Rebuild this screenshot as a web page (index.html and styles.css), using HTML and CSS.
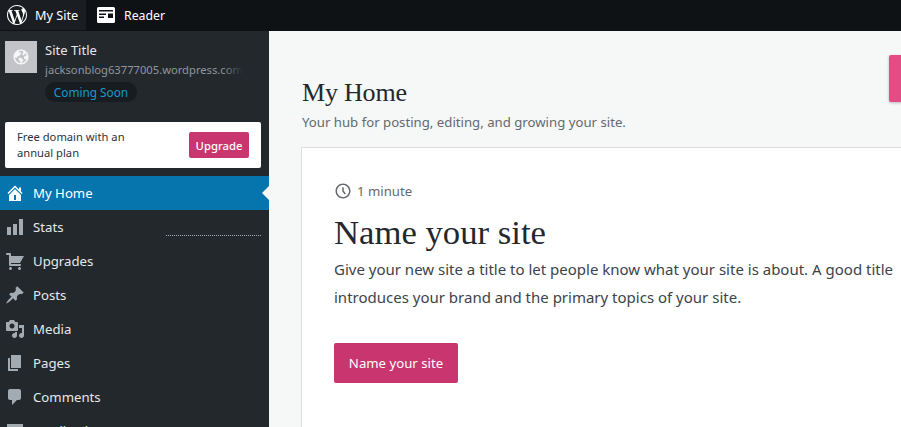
FILE: index.html
```html
<!DOCTYPE html>
<html lang="en">
<head>
  <meta charset="UTF-8" />
  <meta name="viewport" content="width=device-width, initial-scale=1.0"/>
  <title>My Home</title>
  <link rel="stylesheet" href="styles.css">
</head>
<body>

  <!-- Top bar -->
  <header class="topbar">
    <a class="top-tab top-tab-site">
      <svg class="wp-logo" viewBox="0 0 24 24"><path d="M21.469 6.825c.84 1.537 1.318 3.3 1.318 5.175 0 3.979-2.156 7.456-5.363 9.325l3.295-9.527c.615-1.54.82-2.771.82-3.864 0-.405-.026-.78-.07-1.11m-7.981.105c.647-.03 1.232-.105 1.232-.105.582-.075.514-.93-.067-.899 0 0-1.755.135-2.88.135-1.064 0-2.85-.15-2.85-.15-.585-.03-.661.855-.075.885 0 0 .54.061 1.125.09l1.68 4.605-2.37 7.08L5.354 6.9c.649-.03 1.234-.1 1.234-.1.585-.075.516-.93-.065-.896 0 0-1.746.138-2.874.138-.2 0-.438-.008-.69-.015C4.911 3.15 8.235 1.215 12 1.215c2.809 0 5.365 1.072 7.286 2.833-.046-.003-.091-.009-.141-.009-1.06 0-1.812.923-1.812 1.914 0 .89.513 1.643 1.06 2.531.411.72.89 1.643.89 2.977 0 .915-.354 1.994-.821 3.479l-1.075 3.585-3.9-11.61.001.014zM12 22.784c-1.059 0-2.081-.153-3.048-.437l3.237-9.406 3.315 9.087c.024.053.05.101.078.149-1.12.393-2.325.609-3.582.609M1.211 12c0-1.564.336-3.05.935-4.39L7.29 21.709C3.694 19.96 1.212 16.271 1.211 12M12 0C5.385 0 0 5.385 0 12s5.385 12 12 12 12-5.385 12-12S18.615 0 12 0"/></svg>
      <span>My Site</span>
    </a>
    <a class="top-tab top-tab-reader">
      <svg class="reader-icon" viewBox="0 0 18 16"><path fill-rule="evenodd" d="M1.500 0h15A1.500 1.500 0 0 1 18 1.500v13a1.500 1.500 0 0 1-1.500 1.500h-15A1.500 1.500 0 0 1 0 14.500v-13A1.500 1.500 0 0 1 1.500 0zM2 3v1.500h14V3zM2 6.500V8h7V6.500zM2 9.500V11h5V9.500zM11 6.500V11h5V6.500z"/></svg>
      <span>Reader</span>
    </a>
  </header>

  <div class="layout">
    <!-- Sidebar -->
    <aside class="sidebar">
      <div class="site-card">
        <div class="site-avatar">
          <svg viewBox="0 0 24 24"><path d="M12 2C6.477 2 2 6.477 2 12s4.477 10 10 10 10-4.477 10-10S17.523 2 12 2zm0 18l2-2 1-1v-2h-2v-1l-1-1H9v3l2 2v1.930c-3.940-.494-7-3.858-7-7.930l1 1h2v-2h2l3-3V6h-2L9 5v-.41C9.927 4.210 10.940 4 12 4s2.073.212 3 .590V6l-1 1v2l1 1 3.130-3.130c.752.897 1.304 1.964 1.606 3.130H18l-2 2v2l1 1h2l.286.286C18.030 18.060 15.240 20 12 20z"/></svg>
        </div>
        <div class="site-info">
          <div class="site-title">Site Title</div>
          <div class="site-url">jacksonblog63777005.wordpress.com</div>
          <span class="site-badge">Coming Soon</span>
        </div>
      </div>

      <div class="upsell">
        <p>Free domain with an annual plan</p>
        <button class="upsell-btn">Upgrade</button>
      </div>

      <nav class="menu">
        <a class="menu-item active">
          <svg viewBox="0 0 20 20"><path d="M16 8.500l1.530 1.530-1.060 1.060L10 4.620l-6.470 6.470-1.060-1.060L10 2.500l4 4v-2h2v4zm-6-2.460l6 5.990V18H4v-6.030zM11 17v-5H9v5h2z"/></svg>
          <span>My Home</span>
        </a>
        <a class="menu-item">
          <svg viewBox="0 0 20 20"><path d="M18 18V2h-4v16h4zm-6 0V7H8v11h4zm-6 0v-8H2v8h4z"/></svg>
          <span>Stats</span>
          <i class="sparkline"></i>
        </a>
        <a class="menu-item">
          <svg viewBox="0 0 20 20"><path d="M6 13h9c.55 0 1 .45 1 1s-.45 1-1 1H5c-.55 0-1-.45-1-1V4H2c-.55 0-1-.45-1-1s.45-1 1-1h3c.55 0 1 .45 1 1v2h13l-4 7H6v1zm-.5 3c.83 0 1.500.67 1.500 1.500S6.330 19 5.500 19 4 18.330 4 17.500 4.670 16 5.500 16zm9 0c.83 0 1.500.67 1.500 1.500s-.67 1.500-1.500 1.500-1.500-.67-1.500-1.500.67-1.500 1.500-1.500z"/></svg>
          <span>Upgrades</span>
        </a>
        <a class="menu-item">
          <svg viewBox="0 0 20 20"><path d="M10.440 3.020l1.820-1.820 6.360 6.350-1.830 1.820c-1.050-.68-2.480-.57-3.410.36l-.75.75c-.92.93-1.040 2.350-.35 3.410l-1.830 1.820-2.410-2.410-2.800 2.790c-.42.42-3.380 2.710-3.800 2.290s1.860-3.390 2.280-3.810l2.790-2.790L4.100 9.360l1.830-1.820c1.050.69 2.480.57 3.400-.36l.75-.75c.93-.92 1.050-2.350.36-3.410z"/></svg>
          <span>Posts</span>
        </a>
        <a class="menu-item">
          <svg viewBox="0 0 20 20"><path d="M13 11V4c0-.55-.45-1-1-1h-1.670L9 1H5L3.670 3H2c-.55 0-1 .45-1 1v7c0 .55.45 1 1 1h10c.55 0 1-.45 1-1zM7 4.500c1.380 0 2.500 1.120 2.500 2.500S8.380 9.500 7 9.500 4.500 8.380 4.500 7 5.620 4.500 7 4.500zM14 6h5v10.500c0 1.380-1.120 2.500-2.500 2.500S14 17.880 14 16.500s1.120-2.500 2.500-2.500c.17 0 .34.02.5.05V9h-3V6zm-4 8.050V13h2v3.500c0 1.380-1.120 2.500-2.500 2.500S7 17.880 7 16.500 8.120 14 9.500 14c.17 0 .34.02.5.05z"/></svg>
          <span>Media</span>
        </a>
        <a class="menu-item">
          <svg viewBox="0 0 20 20"><path d="M6 15V2h10v13H6zm-1 1h8v2H3V5h2v11z"/></svg>
          <span>Pages</span>
        </a>
        <a class="menu-item">
          <svg viewBox="0 0 20 20"><path d="M5 2h9c1.100 0 2 .9 2 2v7c0 1.100-.9 2-2 2h-2l-5 5v-5H5c-1.100 0-2-.9-2-2V4c0-1.100.9-2 2-2z"/></svg>
          <span>Comments</span>
        </a>
        <a class="menu-item">
          <svg viewBox="0 0 20 20"><path d="M2 3h16v14H2z"/></svg>
          <span>Feedback</span>
        </a>
      </nav>
    </aside>

    <!-- Main content -->
    <main class="content">
      <div class="page-head">
        <div class="page-title">
          <h1>My Home</h1>
          <p class="page-sub">Your hub for posting, editing, and growing your site.</p>
        </div>
        <button class="head-btn"></button>
      </div>

      <section class="task-card">
        <div class="task-time">
          <svg viewBox="0 0 24 24"><path d="M12 4c4.410 0 8 3.590 8 8s-3.590 8-8 8-8-3.590-8-8 3.590-8 8-8m0-2C6.477 2 2 6.477 2 12s4.477 10 10 10 10-4.477 10-10S17.523 2 12 2zm3.800 13.400L13 11.667V7h-2v5.333l3.200 4.266 1.600-1.200z"/></svg>
          <span>1 minute</span>
        </div>
        <h2>Name your site</h2>
        <p class="task-text">Give your new site a title to let people know what your site is about. A good title introduces your brand and the primary topics of your site.</p>
        <button class="task-btn">Name your site</button>
      </section>
    </main>
  </div>

</body>
</html>
```

FILE: styles.css
```css
* {
  box-sizing: border-box;
}

html, body {
  height: 100%;
}

body {
  margin: 0;
  overflow: hidden;
  font-family: "Noto Sans", "Open Sans", sans-serif;
  background: #f6f7f7;
  color: #2c3338;
}

.topbar {
  display: flex;
  height: 31px;
  padding-bottom: 1px;
  background: #0f1215;
  color: #fff;
  font-size: 12.7px;
}

.top-tab {
  display: flex;
  align-items: center;
}

.top-tab-site {
  width: 86px;
  padding-left: 7px;
  background: #1a1e23;
  gap: 8px;
}

.top-tab-reader {
  padding-left: 11px;
  gap: 9px;
  font-size: 12.3px;
}

.wp-logo {
  width: 20px;
  height: 20px;
  fill: #fff;
}

.reader-icon {
  width: 18px;
  height: 16px;
  fill: #fff;
}

.layout {
  display: flex;
  height: 396px;
}

/* Sidebar */
.sidebar {
  flex: 0 0 269px;
  overflow: hidden;
  background: #23282d;
  color: #e6e8ea;
}

.site-card {
  display: flex;
  gap: 8px;
  padding: 10px 0 0 5px;
}

.site-avatar {
  display: flex;
  align-items: center;
  justify-content: center;
  width: 32px;
  height: 32px;
  background: #c3c4c7;
}

.site-avatar svg {
  width: 18px;
  height: 18px;
  fill: #f6f7f7;
}

.site-info {
  width: 198px;
  margin-top: -1px;
}

.site-title {
  font-size: 13px;
  line-height: 20px;
}

.site-url {
  position: relative;
  overflow: hidden;
  margin-top: 1px;
  font-size: 11.2px;
  line-height: 18px;
  white-space: nowrap;
  color: #8f979e;
}

.site-url::after {
  content: "";
  position: absolute;
  top: 0;
  right: 0;
  bottom: 0;
  width: 20px;
  background: linear-gradient(to right, rgba(35, 40, 45, 0), #23282d);
}

.site-badge {
  display: inline-block;
  width: 92px;
  margin-top: 3px;
  border-radius: 10px;
  background: #171c21;
  color: #1a9ac9;
  font-size: 11.8px;
  line-height: 20px;
  text-align: center;
}

.upsell {
  display: flex;
  align-items: center;
  justify-content: space-between;
  width: 256px;
  height: 46px;
  margin: 20px 0 8px 5px;
  padding: 0 12px;
  border-radius: 2px;
  background: #fff;
  color: #2c3338;
}

.upsell p {
  width: 130px;
  margin: 0;
  font-size: 11.2px;
  line-height: 16px;
}

.upsell-btn {
  width: 60px;
  height: 26px;
  padding: 0;
  border: none;
  border-radius: 2px;
  background: #c9356e;
  color: #fff;
  font-family: inherit;
  font-size: 11.3px;
  font-weight: 500;
}

.menu-item {
  position: relative;
  display: flex;
  align-items: center;
  gap: 8px;
  height: 34px;
  padding-left: 5px;
  font-size: 13.2px;
  color: #e6e8ea;
}

.menu-item svg {
  flex: none;
  width: 20px;
  height: 20px;
  fill: #a2aab2;
}

.menu-item.active {
  background: #0675ae;
  color: #fff;
}

.menu-item.active svg {
  fill: #fff;
}

.menu-item.active::after {
  content: "";
  position: absolute;
  top: 10px;
  right: 0;
  border: 7px solid transparent;
  border-right-color: #f6f7f7;
  border-left: none;
}

.sparkline {
  width: 95px;
  margin: 17px 8px 0 auto;
  border-bottom: 1px dotted #a2aab2;
}

/* Main content */
.content {
  flex: 1;
  min-width: 0;
  padding: 24px 0 0 32px;
}

.page-head {
  display: flex;
  align-items: flex-start;
  justify-content: space-between;
  width: 700px;
  height: 92px;
}

.page-title {
  padding-left: 1px;
}

h1 {
  margin: 21px 0 0;
  font-family: "Liberation Serif", serif;
  font-size: 26px;
  font-weight: 400;
  letter-spacing: -0.2px;
  line-height: 34px;
  color: #23282d;
}

.page-sub {
  margin: 2px 0 0;
  font-size: 13.2px;
  line-height: 20px;
  color: #646970;
}

.head-btn {
  width: 112px;
  height: 47px;
  border: none;
  border-radius: 2px;
  background: #e34c84;
  box-shadow: 0 1px 3px rgba(0, 0, 0, 0.25);
}

.task-card {
  width: 700px;
  height: 300px;
  padding: 33px 32px;
  border: 1px solid #dcdcde;
  background: #fff;
}

.task-time {
  display: flex;
  align-items: center;
  gap: 5px;
  font-size: 13.2px;
  line-height: 20px;
  color: #646970;
}

.task-time svg {
  width: 18px;
  height: 18px;
  fill: #646970;
}

h2 {
  margin: 10px 0 0;
  font-family: "Liberation Serif", serif;
  font-size: 34.7px;
  font-weight: 400;
  line-height: 44px;
  color: #23282d;
}

.task-text {
  width: 620px;
  margin: 0;
  font-size: 15px;
  line-height: 28px;
  color: #3c434a;
}

.task-btn {
  width: 124px;
  height: 40px;
  margin-top: 32px;
  padding: 0;
  border: none;
  border-radius: 2px;
  background: #c9356e;
  color: #fff;
  font-family: inherit;
  font-size: 13.2px;
}
```
